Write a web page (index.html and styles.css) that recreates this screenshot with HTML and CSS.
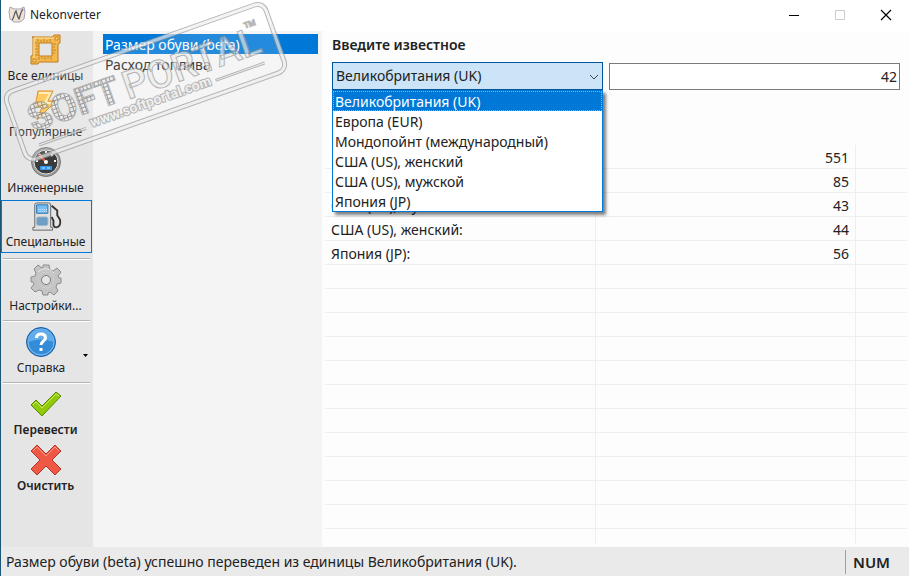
FILE: index.html
```html
<!DOCTYPE html>
<html lang="ru">

<head>
    <meta charset="utf-8">
    <title>Nekonverter</title>
    <link rel="stylesheet" href="styles.css">
</head>

<body>
    <header class="titlebar">
        <svg class="logo" width="18" height="18" viewBox="0 0 18 18">
            <path d="M2 1l4 2h6l4-2 1 5-1 7-4 3H6l-4-3L1 6z" fill="#eee3d0" stroke="#a9a0b8"/>
            <path d="M4 14c2-1 2-7 4-9 1 3 2 7 3 8 1-2 1-7 4-10" fill="none" stroke="#5c5a6c" stroke-width="1.300"/>
        </svg>
        <h1>Nekonverter</h1>
        <button class="win-btn" aria-label="Свернуть">
            <svg width="12" height="12"><path d="M1 6.500h10" stroke="#000"/></svg>
        </button>
        <button class="win-btn" aria-label="Развернуть" disabled>
            <svg width="12" height="12"><path d="M1.500 1.500h9v9h-9z" fill="none" stroke="#ccc"/></svg>
        </button>
        <button class="win-btn" aria-label="Закрыть">
            <svg width="12" height="12"><path d="M1 1l10 10M11 1L1 11" stroke="#000" stroke-width="1.200"/></svg>
        </button>
    </header>

    <div class="workspace">
        <nav class="toolbar">
            <button class="tool">
                <svg width="32" height="32" viewBox="0 0 32 32">
                    <path d="M2 3h21l1-2h6v8l-2 1v18H9l-1 2H1v-8l2-1V3zM9 9v13h13V9z" fill="#f5b84e" stroke="#c17a16" fill-rule="evenodd"/>
                    <path d="M4 4h20M4 4v20" stroke="#ffe2a0"/>
                    <path d="M8 5v3M11 6v2M14 5v3M17 6v2M20 5v3M5 9h3M6 12h2M5 15h3M6 18h2M5 21h3M23 10h3M23 13h2M23 16h3M23 19h2M9 23v3M12 23v2M15 23v3M18 23v2M21 23v3" stroke="#9c6519" stroke-width=".6"/>
                    <path d="M25 3h3v3h-3zM3 25h3v3H3z" fill="#ffd889" stroke="#c98422"/>
                </svg>
                <span>Все единицы</span>
            </button>
            <button class="tool">
                <svg width="32" height="32" viewBox="0 0 32 32">
                    <path d="M8 1h15l-5 10h8L7 30l5-13H5z" fill="#ffc247" stroke="#d38311"/>
                    <path d="M9 3h11l-5 10h6" fill="none" stroke="#ffedb2" stroke-width="2"/>
                </svg>
                <span>Популярные</span>
            </button>
            <button class="tool">
                <svg width="32" height="32" viewBox="0 0 32 32">
                    <circle cx="16" cy="16" r="14.500" fill="#9c9c9c" stroke="#777"/>
                    <circle cx="16" cy="16" r="12" fill="#3b3b3b" stroke="#ddd"/>
                    <path d="M6 15h2M24 15h2M9 8l2 2M23 8l-2 2M15 6h2" stroke="#fff" stroke-width="2"/>
                    <path d="M16 16L9 9" stroke="#ff5533" stroke-width="2"/>
                    <circle cx="16" cy="16" r="2" fill="#fff"/>
                    <path d="M10 20h12v4H10z" fill="#2f94ef"/>
                    <path d="M12 22h3M17 22h3" stroke="#cfe9ff"/>
                </svg>
                <span>Инженерные</span>
            </button>
            <button class="tool active">
                <svg width="32" height="32" viewBox="0 0 32 32">
                    <path d="M22 4l6 5v5l3 5c1 5-1 8-4 8-4 0-3-4-3-7l-2-4" fill="none" stroke="#333" stroke-width="2"/>
                    <path d="M4 3q0-2 2-2h13q2 0 2 2v24h2v3H2v-3h2z" fill="#e0e0e0" stroke="#626262"/>
                    <path d="M6 3h12v9H6z" fill="#76bdf3" stroke="#2872ad"/>
                    <path d="M8 8h9M8 10h9" stroke="#def1ff" stroke-dasharray="1 1"/>
                    <rect x="6" y="16" width="12" height="9" rx="2" fill="#6f9dc3" stroke="#9bb5ca"/>
                </svg>
                <span>Специальные</span>
            </button>
            <hr>
            <button class="tool">
                <svg width="32" height="32" viewBox="0 0 32 32">
                    <path d="M13 1h6l1 5 3 1 4-3 4 4-3 4 1 2h2v5l-4 1-1 3 2 4-4 4-4-3-2 1v2h-5l-1-4-3-1-4 2-4-4 3-4-1-2H1v-5l4-1 1-3-2-4 4-4 4 3 1-1z" fill="#c4c4c4" stroke="#8c8c8c"/>
                    <path d="M8 8q8-7 16 1" fill="none" stroke="#e6e6e6"/>
                    <circle cx="16" cy="16" r="8" fill="none" stroke="#cecece"/>
                    <circle cx="16" cy="16" r="4.500" fill="#e5e5e5" stroke="#7c7c7c"/>
                </svg>
                <span>Настройки...</span>
            </button>
            <hr>
            <div class="split">
                <button class="tool">
                    <svg width="32" height="32" viewBox="0 0 32 32">
                        <circle cx="16" cy="16" r="14.500" fill="#348cd8" stroke="#1b60a3"/>
                        <circle cx="16" cy="16" r="13" fill="none" stroke="#8ac2ee"/>
                        <path d="M3 16a13 13 0 0 1 26 0q-13-5-26 0" fill="#61acea"/>
                        <path d="M11.500 12q0-4 4.500-4t4.500 4c0 3-4.500 3-4.500 7" fill="none" stroke="#fff" stroke-width="3"/>
                        <path d="M14.500 22h3v3h-3z" fill="#fff"/>
                    </svg>
                    <span>Справка</span>
                </button>
                <button class="more" aria-label="Ещё">
                    <svg width="5" height="3"><path d="M0 0h5L2.500 3z"/></svg>
                </button>
            </div>
            <hr>
            <button class="tool strong">
                <svg width="32" height="32" viewBox="0 0 32 32">
                    <path d="M1 17l5-5 6 6L26 4l5 4-19 20z" fill="#91c90b" stroke="#568900"/>
                    <path d="M3 17l3-3 6 6L26 6l3 2" fill="none" stroke="#c5eb5c"/>
                </svg>
                <span>Перевести</span>
            </button>
            <button class="tool strong">
                <svg width="32" height="32" viewBox="0 0 32 32">
                    <path d="M7 1l9 9 9-9 6 6-9 9 9 9-6 6-9-9-9 9-6-6 9-9-9-9z" fill="#ef5844" stroke="#b73324"/>
                    <path d="M3 7l4-4 9 9 9-9 4 4" fill="none" stroke="#ff9c83"/>
                </svg>
                <span>Очистить</span>
            </button>
        </nav>

        <aside class="categories">
            <button class="row selected">Размер обуви (beta)</button>
            <button class="row">Расход топлива</button>
        </aside>

        <main class="converter">
            <label class="caption" for="unit">Введите известное</label>
            <div class="inputs">
                <div class="combo">
                    <select id="unit">
                        <option>Великобритания (UK)</option>
                        <option>Европа (EUR)</option>
                        <option>Мондопойнт (международный)</option>
                        <option>США (US), женский</option>
                        <option>США (US), мужской</option>
                        <option>Япония (JP)</option>
                    </select>
                    <svg class="chevron" width="10" height="6"><path d="M1 1l4 4 4-4" fill="none" stroke="#444"/></svg>
                    <div class="dropdown">
                        <button class="row selected">Великобритания (UK)</button>
                        <button class="row">Европа (EUR)</button>
                        <button class="row">Мондопойнт (международный)</button>
                        <button class="row">США (US), женский</button>
                        <button class="row">США (US), мужской</button>
                        <button class="row">Япония (JP)</button>
                    </div>
                </div>
                <input class="value" type="text" value="42" aria-label="Значение">
            </div>

            <table class="results">
                <colgroup><col class="col-name"><col class="col-value"><col></colgroup>
                <tbody>
                    <tr><td>Мондопойнт:</td><td>551</td><td></td></tr>
                    <tr><td>Европа (EUR):</td><td>85</td><td></td></tr>
                    <tr><td>США (US), мужской:</td><td>43</td><td></td></tr>
                    <tr><td>США (US), женский:</td><td>44</td><td></td></tr>
                    <tr><td>Япония (JP):</td><td>56</td><td></td></tr>
                    <tr><td></td><td></td><td></td></tr>
                    <tr><td></td><td></td><td></td></tr>
                    <tr><td></td><td></td><td></td></tr>
                    <tr><td></td><td></td><td></td></tr>
                    <tr><td></td><td></td><td></td></tr>
                    <tr><td></td><td></td><td></td></tr>
                    <tr><td></td><td></td><td></td></tr>
                    <tr><td></td><td></td><td></td></tr>
                    <tr><td></td><td></td><td></td></tr>
                    <tr><td></td><td></td><td></td></tr>
                    <tr><td></td><td></td><td></td></tr>
                    <tr class="last"><td></td><td></td><td></td></tr>
                </tbody>
            </table>
        </main>
    </div>

    <footer class="statusbar">
        <span class="message">Размер обуви (beta) успешно переведен из единицы Великобритания (UK).</span>
        <span class="num">NUM</span>
    </footer>

    <!-- stamp over the top left corner -->
    <svg class="stamp" width="292" height="170" viewBox="0 0 292 170">
        <defs>
            <pattern id="cells" width="4" height="4" patternUnits="userSpaceOnUse">
                <rect width="4" height="4" fill="#777"/>
                <rect width="3" height="3" fill="#eee"/>
            </pattern>
        </defs>
        <g transform="translate(145 82) rotate(-19.5)">
            <rect class="frame-dark" x="-137" y="-36" width="275" height="72" rx="9"/>
            <rect class="frame-light" x="-137" y="-36" width="275" height="72" rx="9"/>
            <text class="soft" x="-122" y="10">SOFT</text>
            <text class="portal" x="-22" y="11">PORTAL</text>
            <text class="tm" x="112" y="-17">TM</text>
            <text class="site" x="-65" y="25">www.softportal.com</text>
            <path class="rule-dark" d="M-121 24h50M67 22h52"/>
            <path class="rule-light" d="M-121 24h50M67 22h52"/>
        </g>
    </svg>
</body>

</html>
```
FILE: styles.css
```css
* {
    box-sizing: border-box;
}

body {
    margin: 0;
    min-height: 100vh;
    display: flex;
    flex-direction: column;
    border-left: 1px solid #1b5578;
    background: #fdfdfd;
    color: #222;
    font-family: "Noto Sans", "Open Sans", sans-serif;
    font-size: 14px;
    line-height: 20px;
}

button {
    margin: 0;
    padding: 0;
    border: 0;
    background: none;
    color: inherit;
    font: inherit;
}

.titlebar {
    display: flex;
    align-items: center;
    height: 31px;
    padding-left: 7px;
    padding-bottom: 2px;
    background: #fff;
}

.titlebar h1 {
    flex: 1;
    margin: 0 0 0 4px;
    font-size: 12px;
    font-weight: 400;
}

.win-btn {
    display: grid;
    place-items: center;
    width: 46px;
    height: 28px;
}

.workspace {
    flex: 1;
    display: flex;
}

/* left toolbar */
.toolbar {
    display: flex;
    flex-direction: column;
    width: 92px;
    padding-top: 1px;
    background: #e5e5e5;
}

.tool {
    display: flex;
    flex-direction: column;
    align-items: center;
    width: 89px;
    height: 56px;
    padding-top: 2px;
    font-size: 12px;
    white-space: nowrap;
}

.tool.active {
    width: 91px;
    height: 53px;
    margin-bottom: 3px;
    padding: 1px 2px 0 0;
    border: 1px solid #0078d7;
}

.tool.strong {
    font-weight: 600;
}

.toolbar hr {
    width: 87px;
    height: 2px;
    margin: 2px;
    border: 0;
    border-top: 1px solid #b4b4b4;
    border-bottom: 1px solid #fff;
}

.split {
    display: flex;
}

.split .tool {
    width: 80px;
}

.more {
    width: 8px;
}

/* lists */
.categories {
    width: 229px;
    padding: 3px 4px 0 10px;
    background: #f4f4f4;
}

.row {
    display: block;
    width: 100%;
    height: 20px;
    padding: 2px 2px 0;
    line-height: 18px;
    text-align: left;
    white-space: nowrap;
}

.row.selected {
    background: #0078d7;
    color: #fff;
}

.converter {
    flex: 1;
    padding: 4px 2px 0 3px;
}

.caption {
    display: block;
    margin-left: 7px;
    font-weight: 600;
}

.inputs {
    display: flex;
    gap: 6px;
    margin: 7px 7px 0;
}

.combo {
    position: relative;
    width: 271px;
}

.combo select {
    display: block;
    width: 100%;
    height: 28px;
    padding: 0 3px;
    appearance: none;
    border: 1px solid #00559b;
    border-radius: 0;
    background: #cce4f7;
    color: inherit;
    font: inherit;
}

.chevron {
    position: absolute;
    right: 4px;
    top: 12px;
}

.dropdown {
    position: absolute;
    left: 0;
    right: 0;
    top: 28px;
    border: 1px solid #0078d7;
    background: #fff;
    box-shadow: 3px 3px 3px rgba(0, 0, 0, .5);
}

.dropdown .selected {
    outline: 1px dotted #e39b55;
    outline-offset: -1px;
}

.value {
    flex: 1;
    min-width: 0;
    height: 27px;
    margin-top: 1px;
    padding: 0 2px;
    border: 1px solid #7a7a7a;
    background: #fff;
    color: inherit;
    font: inherit;
    text-align: right;
}

.results {
    width: 100%;
    margin-top: 55px;
    border-spacing: 0;
    table-layout: fixed;
}

.col-name {
    width: 271px;
}

.col-value {
    width: 260px;
}

.results td {
    height: 24px;
    padding: 2px 6px 0;
    border-right: 1px solid #eee;
    border-bottom: 1px solid #eee;
}

.results td:nth-child(2) {
    text-align: right;
}

.results td:last-child {
    border-right: 0;
}

.results .last td {
    height: 15px;
    border-bottom: 0;
}

.statusbar {
    display: flex;
    align-items: center;
    height: 29px;
    padding-left: 5px;
    background: #eaeaea;
}

.message {
    flex: 1;
}

.num {
    width: 64px;
    padding: 2px 0 2px 7px;
    border-left: 1px solid #a0a0a0;
    font-size: 15px;
    font-weight: 600;
}

.stamp {
    position: absolute;
    left: 0;
    top: 0;
    opacity: .7;
    pointer-events: none;
}

.frame-dark {
    fill: rgba(255, 255, 255, .2);
    stroke: #999;
    stroke-width: 5px;
}

.frame-light {
    fill: none;
    stroke: #eee;
    stroke-width: 3px;
}

.soft,
.portal,
.tm,
.site {
    font-family: Roboto, sans-serif;
    font-weight: 700;
    fill: #eee;
    stroke: #999;
    stroke-width: 1px;
}

.soft {
    font-size: 38px;
    font-weight: 900;
    fill: url(#cells);
}

.portal {
    font-size: 39px;
    font-weight: 500;
}

.tm {
    font-size: 8px;
}

.site {
    font-size: 14px;
    paint-order: stroke;
    stroke-width: 2px;
}

.rule-dark {
    stroke: #999;
    stroke-width: 3px;
}

.rule-light {
    stroke: #eee;
    stroke-width: 1px;
}
```
